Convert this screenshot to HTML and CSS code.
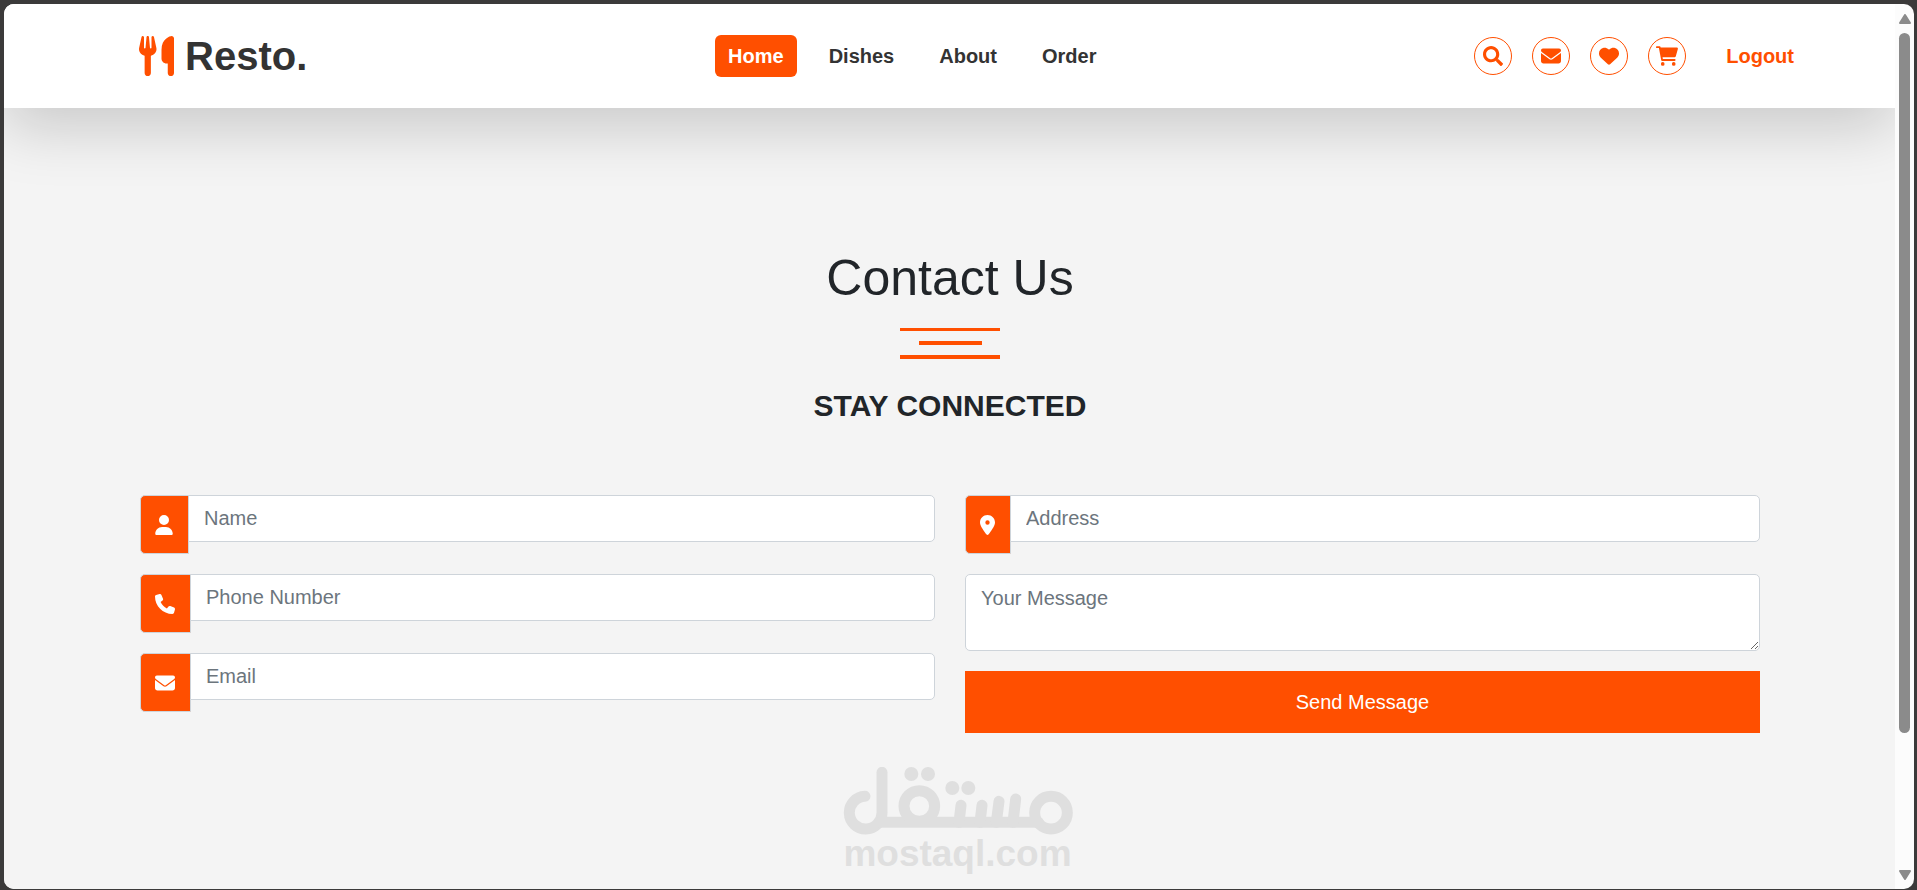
FILE: index.html
```html
<!DOCTYPE html>
<html lang="en">
<head>
<meta charset="utf-8">
<title>Resto. - Contact Us</title>
<link rel="stylesheet" href="styles.css">
</head>
<body>
<div class="window">
  <div class="page">
    <header class="header">
      <a class="logo" href="#">
        <svg class="logo-icon" viewBox="0 0 448 512" aria-hidden="true"><path d="M416 0C400 0 288 32 288 176V288c0 35.3 28.7 64 64 64h16V472c0 22 18 40 40 40s40-18 40-40V352 240 32c0-17.7-14.3-32-32-32z"/><path d="M64 16C64 7.8 57.9 1 49.7 .1S34.2 4.6 32.4 12.5L2.1 148.8C.7 155.1 0 161.5 0 167.9c0 42 28 76 72 86V472c0 22 18 40 40 40s40-18 40-40V253.9c44-10 72-44 72-86c0-6.4-.7-12.8-2.1-19.1L191.6 12.5c-1.8-8-9.3-13.3-17.4-12.4S160 7.8 160 16V150.2c0 5.4-4.4 9.8-9.8 9.8c-5.1 0-9.3-3.9-9.8-9L127.9 14.6C127.2 6.3 120.3 0 112 0s-15.2 6.3-15.9 14.6L83.7 151c-.5 5.1-4.7 9-9.8 9c-5.4 0-9.8-4.4-9.8-9.8V16z"/></svg>
        <span>Resto.</span>
      </a>
      <nav class="nav">
        <a class="nav-link active" href="#">Home</a>
        <a class="nav-link" href="#">Dishes</a>
        <a class="nav-link" href="#">About</a>
        <a class="nav-link" href="#">Order</a>
      </nav>
      <div class="actions">
        <div class="icons">
          <button class="round" type="button" aria-label="Search"><svg class="icon" viewBox="0 0 512 512"><path d="M505 442.7L405.3 343c-4.5-4.5-10.6-7-17-7H372c27.6-35.3 44-79.7 44-128C416 93.1 322.9 0 208 0S0 93.1 0 208s93.1 208 208 208c48.3 0 92.7-16.4 128-44v16.3c0 6.4 2.5 12.5 7 17l99.7 99.7c9.4 9.4 24.6 9.4 33.9 0l28.3-28.3c9.4-9.4 9.4-24.6.1-34zM208 336c-70.7 0-128-57.2-128-128 0-70.7 57.2-128 128-128 70.7 0 128 57.2 128 128 0 70.7-57.2 128-128 128z"/></svg></button>
          <a class="round" href="#" aria-label="Messages"><svg class="icon" viewBox="0 0 512 512"><path d="M48 64C21.5 64 0 85.5 0 112c0 15.1 7.1 29.3 19.2 38.4L236.8 313.6c11.4 8.5 27 8.5 38.4 0L492.8 150.4c12.1-9.1 19.2-23.3 19.2-38.4c0-26.5-21.5-48-48-48H48zM0 176V384c0 35.3 28.7 64 64 64H448c35.3 0 64-28.7 64-64V176L294.4 339.2c-22.8 17.1-54 17.1-76.8 0L0 176z"/></svg></a>
          <a class="round" href="#" aria-label="Favourites"><svg class="icon" viewBox="0 0 512 512"><path d="M47.6 300.4L228.3 469.1c7.5 7 17.4 10.9 27.7 10.9s20.2-3.9 27.7-10.9L464.4 300.4c30.4-28.3 47.6-68 47.6-109.5v-5.8c0-69.9-50.5-129.5-119.4-141C347 36.5 300.6 51.4 268 84L256 96 244 84c-32.6-32.6-79-47.5-124.6-39.9C50.5 55.6 0 115.2 0 185.1v5.8c0 41.5 17.2 81.2 47.6 109.5z"/></svg></a>
          <a class="round" href="#" aria-label="Cart"><svg class="icon icon-cart" viewBox="0 0 576 512"><path d="M96 0C107.5 0 117.4 8.19 119.6 19.51L121.1 32H541.8C562.1 32 578.3 52.25 572.6 72.66L518.6 264.7C514.7 278.5 502.1 288 487.8 288H170.7L179.9 336H488C501.3 336 512 346.7 512 360C512 373.3 501.3 384 488 384H159.1C148.5 384 138.6 375.8 136.4 364.5L76.14 48H24C10.75 48 0 37.25 0 24C0 10.75 10.75 0 24 0H96zM128 464a48 48 0 1 1 96 0 48 48 0 1 1 -96 0zM416 464a48 48 0 1 1 96 0 48 48 0 1 1 -96 0z"/></svg></a>
        </div>
        <a class="logout" href="#">Logout</a>
      </div>
    </header>

    <main class="contact">
      <h1 class="title">Contact Us</h1>
      <div class="divider" aria-hidden="true">
        <span class="bar thin"></span>
        <span class="bar short"></span>
        <span class="bar"></span>
      </div>
      <h2 class="subtitle">STAY CONNECTED</h2>

      <form class="form">
        <div class="column">
          <div class="field">
            <label class="tag" for="name" aria-label="Name"><svg class="icon icon-user" viewBox="0 0 448 512"><path d="M224 256A128 128 0 1 0 224 0a128 128 0 1 0 0 256zm-50 48C78 304 0 382 0 478C0 497 15 512 34 512H414c19 0 34-15 34-34C448 382 370 304 274 304H174z"/></svg></label>
            <input class="input" id="name" type="text" placeholder="Name">
          </div>
          <div class="field">
            <label class="tag" for="phone" aria-label="Phone Number"><svg class="icon" viewBox="0 0 512 512"><path d="M164.9 24.6c-7.7-18.6-28-28.5-47.4-23.2l-88 24C12.1 30.2 0 46 0 64C0 311.4 200.6 512 448 512c18 0 33.8-12.1 38.6-29.5l24-88c5.3-19.4-4.6-39.7-23.2-47.4l-96-40c-16.3-6.8-35.2-2.1-46.3 11.6L304.7 368C234.3 334.7 177.3 277.7 144 207.3L193.3 167c13.7-11.2 18.4-30 11.6-46.3l-40-96z"/></svg></label>
            <input class="input" id="phone" type="tel" placeholder="Phone Number">
          </div>
          <div class="field">
            <label class="tag" for="email" aria-label="Email"><svg class="icon" viewBox="0 0 512 512"><path d="M48 64C21.5 64 0 85.5 0 112c0 15.1 7.1 29.3 19.2 38.4L236.8 313.6c11.4 8.5 27 8.5 38.4 0L492.8 150.4c12.1-9.1 19.2-23.3 19.2-38.4c0-26.5-21.5-48-48-48H48zM0 176V384c0 35.3 28.7 64 64 64H448c35.3 0 64-28.7 64-64V176L294.4 339.2c-22.8 17.1-54 17.1-76.8 0L0 176z"/></svg></label>
            <input class="input" id="email" type="email" placeholder="Email">
          </div>
        </div>
        <div class="column">
          <div class="field">
            <label class="tag" for="address" aria-label="Address"><svg class="icon icon-pin" viewBox="0 0 384 512"><path d="M215.7 499.2C267 435 384 279.4 384 192C384 86 298 0 192 0S0 86 0 192c0 87.4 117 243 168.3 307.2c12.3 15.3 35.1 15.3 47.4 0zM192 136a56 56 0 1 1 0 112 56 56 0 1 1 0-112z"/></svg></label>
            <input class="input" id="address" type="text" placeholder="Address">
          </div>
          <textarea class="message" rows="2" placeholder="Your Message" aria-label="Your Message"></textarea>
          <button class="send" type="submit">Send Message</button>
        </div>
      </form>
    </main>
  </div>

  <div class="scrollbar" aria-hidden="true">
    <svg class="arrow" viewBox="0 0 12 10"><path d="M6 1L11 9H1z"/></svg>
    <div class="track"><div class="thumb"></div></div>
    <svg class="arrow" viewBox="0 0 12 10"><path d="M6 9L11 1H1z"/></svg>
  </div>
</div>

<div class="watermark">
  <svg class="watermark-logo" viewBox="69 48 690 204" aria-label="مستقل" role="img">
    <g class="strokes">
      <path d="M135 136A49 49 0 1 0 186 185V64"/>
      <path d="M180 214H655"/>
      <circle cx="298" cy="165" r="46"/>
      <path d="M423 163L417 214M486 163L480 214M537 151L529 214M587 144L579 214"/>
      <circle cx="693" cy="185" r="49"/>
    </g>
    <circle cx="274" cy="69" r="21"/>
    <circle cx="324" cy="69" r="21"/>
    <circle cx="397" cy="111" r="21"/>
    <circle cx="445" cy="111" r="21"/>
  </svg>
  <span class="watermark-text">mostaql.com</span>
</div>
</body>
</html>
```

FILE: styles.css
```css
* {
  box-sizing: border-box;
}

body {
  margin: 0;
  height: 100vh;
  padding: 4px 3px 1px 4px;
  overflow: hidden;
  position: relative;
  background: #3b3a3a;
  color: #212529;
  font-family: "Liberation Sans", Arial, sans-serif;
  font-size: 20px;
}

a {
  color: inherit;
  text-decoration: none;
}

svg {
  display: block;
  fill: currentColor;
}

.window {
  display: flex;
  height: 100%;
  border-radius: 10px;
  overflow: hidden;
  background: #fcfcfc;
}

.page {
  flex: 1;
  min-width: 0;
  overflow: hidden;
  background: #f4f4f4;
}

/* Header */
.header {
  display: flex;
  align-items: center;
  justify-content: space-between;
  height: 104px;
  padding: 0 101px 0 135px;
  background: #fff;
  box-shadow: 0 20px 60px rgba(0, 0, 0, 0.175);
}

.logo {
  display: flex;
  align-items: center;
  gap: 11px;
  color: #333;
  font-size: 40px;
  font-weight: bold;
}

.logo-icon {
  width: 35px;
  height: 40px;
  color: #ff4f00;
}

.nav {
  display: flex;
  gap: 19px;
  margin-left: 43px;
}

.nav-link {
  padding: 10px 13px 9px;
  border-radius: 6px;
  color: #333;
  font-weight: bold;
  line-height: 23px;
}

.nav-link.active {
  background: #ff4f00;
  color: #fff;
}

.actions {
  display: flex;
  align-items: center;
  gap: 40px;
  color: #ff4f00;
}

.icons {
  display: flex;
  gap: 20px;
}

.round {
  display: flex;
  align-items: center;
  justify-content: center;
  width: 38px;
  height: 38px;
  padding: 0;
  border: 1px solid #ff4f00;
  border-radius: 50%;
  background: #fff;
  color: #ff4f00;
}

.icon {
  width: 20px;
  height: 20px;
}

.icon-cart {
  width: 22px;
}

.icon-user {
  width: 18px;
}

.icon-pin {
  width: 15px;
}

.logout {
  font-weight: bold;
}

/* Contact section */
.contact {
  padding: 140px 135px 0 136px;
}

.title {
  margin: 0 0 20px;
  font-size: 50px;
  font-weight: normal;
  line-height: 60px;
  text-align: center;
}

.divider {
  display: flex;
  flex-direction: column;
  align-items: center;
  gap: 10px;
  margin-bottom: 29px;
}

.bar {
  width: 100px;
  height: 4px;
  background: #ff4f00;
}

.bar.thin {
  height: 3px;
}

.bar.short {
  width: 63px;
}

.subtitle {
  margin: 0 0 71px;
  font-size: 30px;
  line-height: 36px;
  text-align: center;
}

.form {
  display: grid;
  grid-template-columns: 1fr 1fr;
  gap: 30px;
}

.column {
  display: flex;
  flex-direction: column;
  gap: 20px;
}

.field {
  display: flex;
  align-items: flex-start;
}

.tag {
  display: flex;
  align-items: center;
  height: 59px;
  padding: 0 15px 0 14px;
  border: 1px solid #ced4da;
  border-radius: 5px 0 0 5px;
  background: #ff4f00;
  color: #fff;
}

.input,
.message {
  border: 1px solid #ced4da;
  background: #fff;
  color: #212529;
  font: inherit;
  outline: none;
}

.input {
  flex: 1;
  min-width: 0;
  height: 47px;
  margin-left: -1px;
  padding: 7px 15px;
  border-radius: 0 5px 5px 0;
}

.message {
  display: block;
  width: 100%;
  height: 77px;
  padding: 8px 15px;
  border-radius: 5px;
  line-height: 30px;
  resize: vertical;
}

.input::placeholder,
.message::placeholder {
  color: #6c757d;
  opacity: 1;
}

.send {
  height: 62px;
  border: 0;
  background: #ff4f00;
  color: #fff;
  font: inherit;
}

/* Scrollbar */
.scrollbar {
  display: flex;
  flex-direction: column;
  align-items: center;
  gap: 9px;
  width: 19px;
  padding: 10px 0 9px;
  color: #8b8b8b;
}

.arrow {
  width: 12px;
  height: 10px;
  stroke: currentColor;
  stroke-width: 2;
  stroke-linejoin: round;
}

.track {
  flex: 1;
  width: 11px;
}

.thumb {
  height: 84.5%;
  border-radius: 6px;
  background: #8b8b8b;
}

/* Watermark */
.watermark {
  position: absolute;
  bottom: 17px;
  left: 0;
  right: 2px;
  display: flex;
  flex-direction: column;
  align-items: center;
  color: #dfdfdf;
  pointer-events: none;
}

.watermark-logo {
  width: 230px;
  height: 68px;
}

.strokes {
  fill: none;
  stroke: currentColor;
  stroke-width: 33;
  stroke-linecap: round;
}

.watermark-text {
  font-size: 37px;
  font-weight: bold;
  line-height: 38px;
}
```
